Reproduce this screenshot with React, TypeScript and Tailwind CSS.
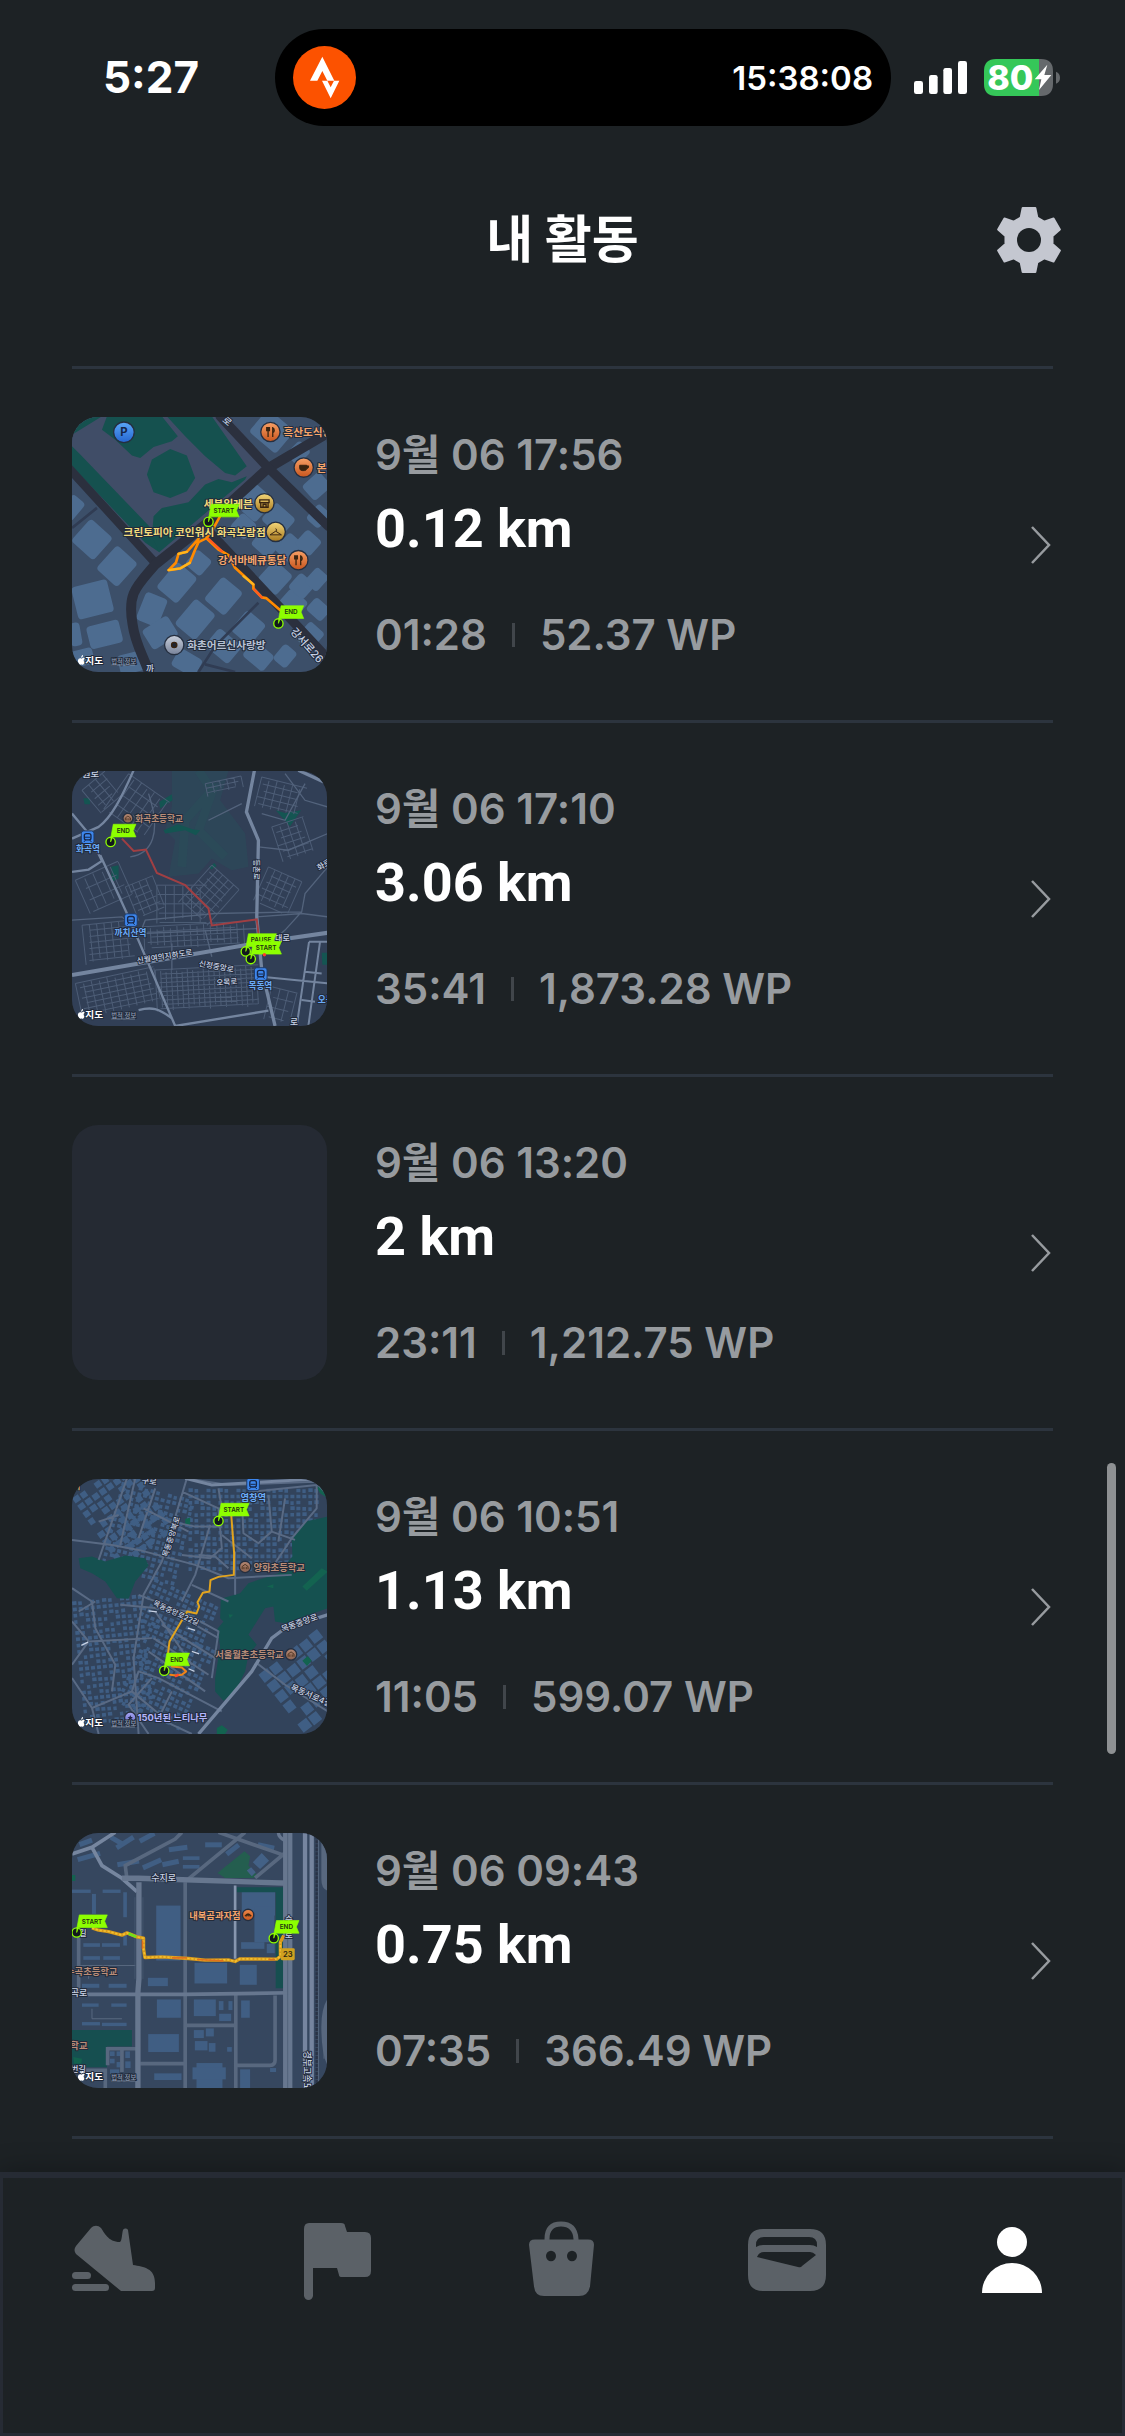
import type { ReactNode } from 'react';

const MAP_FONT = "Inter, 'Noto Sans CJK KR', sans-serif";

type Point = [number, number];

/* ---------- Map building parts ---------- */

function Flag({ x, y, label }: { x: number; y: number; label: string }) {
  const w = label === 'END' ? 68 : 84;
  return (
    <g transform={`translate(${x} ${y})`}>
      <circle r="14" fill="#12181c" stroke="#8dff00" strokeWidth="4" />
      <path d={`M8 -53H${8 + w}L${w} -34L${8 + w} -15H6L0 0L1 -15Z`} fill="#8dff00" stroke="#8dff00" strokeWidth="2" />
      <text x={w / 2 + 4} y="-27" textAnchor="middle" fontFamily={MAP_FONT} fontSize="19" fontWeight="600" fill="#1d3312">
        {label}
      </text>
    </g>
  );
}

type LabelProps = { x: number; y: number; children: ReactNode; color?: string; size?: number; rotate?: number; weight?: number };

function Label({ x, y, children, color = '#c9d3e6', size = 28, rotate = 0, weight = 500 }: LabelProps) {
  return (
    <text
      transform={`translate(${x} ${y}) rotate(${rotate})`}
      fontFamily={MAP_FONT}
      fontSize={size}
      fontWeight={weight}
      fill={color}
      stroke="#222b3b"
      strokeWidth="6"
      strokeLinejoin="round"
      paintOrder="stroke"
    >
      {children}
    </text>
  );
}

// Evenly spaced small streets, rotated around the block's corner
function Streets({ x, y, w, h, dx, dy, rotate = 0 }: { x: number; y: number; w: number; h: number; dx: number; dy: number; rotate?: number }) {
  let d = '';
  for (let i = 0; i <= w; i += dx) d += `M${i} ${(i * 3) % 11}V${h - ((i * 5) % 17)}`;
  for (let j = 0; j <= h; j += dy) d += `M${(j * 5) % 23} ${j}H${w - ((j * 7) % 29)}`;
  return <path d={d} transform={`translate(${x} ${y}) rotate(${rotate})`} fill="none" stroke="#4d5d76" strokeWidth="3" />;
}

// Rows of small buildings with a slightly uneven footprint
function Buildings({ x, y, cols, rows, step = 18, rotate = 0 }: { x: number; y: number; cols: number; rows: number; step?: number; rotate?: number }) {
  let d = '';
  for (let i = 0; i < cols; i++) {
    for (let j = 0; j < rows; j++) {
      const n = (i * 7 + j * 11 + i * j * 3) % 5;
      if (n === 4) continue;
      d += `M${i * step} ${j * step + n}h${step - 5 - n}v${step - 7}h-${step - 5 - n}z`;
    }
  }
  return <path d={d} transform={`translate(${x} ${y}) rotate(${rotate})`} fill="#3f5e84" />;
}

function Poi({ x, y, r = 29, from, to, children }: { x: number; y: number; r?: number; from: string; to: string; children?: ReactNode }) {
  const id = `poi-${x}-${y}`;
  return (
    <g>
      <linearGradient id={id} x1="0" y1="0" x2="0" y2="1">
        <stop offset="0" stopColor={from} />
        <stop offset="1" stopColor={to} />
      </linearGradient>
      <circle cx={x} cy={y} r={r} fill={`url(#${id})`} stroke="#252f40" strokeWidth="4" />
      <g transform={`translate(${x} ${y}) scale(${r / 29})`} fill="none" stroke="#3a2410" strokeWidth="4">
        {children}
      </g>
    </g>
  );
}

function Station({ x, y }: { x: number; y: number }) {
  return (
    <g transform={`translate(${x} ${y})`}>
      <rect x="-19" y="-19" width="38" height="38" rx="7" fill="#3d86ec" stroke="#1f3a66" strokeWidth="3" />
      <rect x="-10" y="-11" width="20" height="19" rx="6" fill="none" stroke="#15264a" strokeWidth="4" />
      <path d="M-8 0H8M-7 9L-11 14M7 9L11 14" stroke="#15264a" strokeWidth="3" />
    </g>
  );
}

const school = <path d="M-15 12V-2L0 -13L15 -2V12M-6 12V0M6 12V0" />;
const fork = <path d="M-7 -15V15M7 15V-15M-11 -15V-4H-3V-15M7 -13C13 -9 13 0 7 2" />;

function MapFrame({ land, label, children }: { land: string; label: string; children: ReactNode }) {
  return (
    <svg viewBox="0 2 766 766" role="img" aria-label={label} className="block size-full">
      <rect width="768" height="770" fill={land} />
      {children}
      <path d="M29 728c4-4 9-3 9 0c-4 2-4 8 0 11c-2 5-4 8-7 7c-3-1-4-1-6 0c-4 0-8-8-7-13c1-6 6-8 11-5M28 725c-1-4 2-7 5-8c1 4-2 8-5 8" fill="#fff" />
      <Label x={40} y={744} color="#ffffff" size={29} weight={700}>지도</Label>
      <Label x={118} y={743} color="#8f9db3" size={19}>법적 정보</Label>
      <path d="M118 747H189" stroke="#8f9db3" strokeWidth="2" />
    </svg>
  );
}

/* ---------- Route maps ---------- */

function GangseoMap() {
  // Centre x, centre y, width, height, turn of each city block
  const blocks = [
    [0, 275, 50, 70, 40], [60, 370, 90, 90, 42], [135, 450, 85, 95, 42], [62, 550, 110, 100, -14], [98, 655, 100, 70, -14],
    [30, 725, 70, 50, -14], [10, 655, 34, 70, -10], [240, 580, 70, 90, 22], [265, 650, 90, 70, -32], [315, 500, 80, 100, 40],
    [380, 440, 60, 60, 40], [455, 540, 80, 90, 40], [370, 610, 80, 100, 40], [455, 690, 90, 70, 40], [530, 635, 75, 80, 40],
    [560, 720, 80, 60, 40], [640, 720, 50, 60, 40], [610, 485, 75, 80, 42], [665, 560, 70, 60, 42], [690, 510, 60, 60, 42],
    [740, 580, 60, 50, 42], [735, 490, 50, 60, 42], [600, 45, 105, 90, 40], [735, 210, 60, 70, 48], [740, 300, 50, 60, 42],
    [550, 260, 80, 90, 42], [620, 310, 80, 70, 42], [660, 400, 80, 70, 42], [585, 380, 70, 70, 42], [710, 380, 60, 60, 42],
    [345, 740, 80, 60, 30], [180, 740, 80, 60, -14], [515, 330, 60, 60, 42], [680, 110, 50, 60, 45], [715, 660, 60, 70, 42],
  ];
  return (
    <MapFrame land="#3c4f69" label="강서로 경로">
      <path d="M0 0H470L600 150L260 440L0 140Z" fill="#404d67" />
      <path d="M0 0H90L0 55ZM105 0H270L318 60L300 75L245 92L205 125L180 118L130 70L90 40ZM285 0H420L525 150L490 178L460 170L400 120L340 60ZM0 90L22 112L232 330L250 350L262 408L220 380L0 150ZM240 130L295 98L345 118L370 185L345 225L295 245L245 228L225 175Z" fill="#15514f" />
      <path d="M240 360L245 300L270 275L350 258L400 205L440 188L480 198L525 180L520 190L262 408Z" fill="#15514f" />
      {blocks.map(([x, y, w, h, turn], i) => (
        <rect key={i} x={x - w / 2} y={y - h / 2} width={w} height={h} rx="12" transform={`rotate(${turn} ${x} ${y})`} fill="#4d6c90" />
      ))}
      <path d="M0 335L75 275M560 560L430 690L380 768M400 745L490 768" fill="none" stroke="#303c53" strokeWidth="8" />
      <g fill="none" stroke="#2b303e" strokeLinecap="round">
        <path d="M-10 155L250 440" strokeWidth="26" />
        <path d="M768 50L590 155L420 310L250 445C195 510 165 530 182 625C190 685 215 720 235 780" strokeWidth="30" />
        <path d="M445 0L590 155L770 330M420 355L770 730" strokeWidth="28" />
      </g>
      <g fill="none" strokeLinecap="round" strokeLinejoin="round">
        <path d="M445 300L420 345L404 366L380 378L370 400L354 440L325 457L290 462L312 440L320 413L345 407L380 368M404 366L440 400L470 417L490 455L545 505V518L570 544L583 546L625 582" stroke="#ff8a00" strokeWidth="8" />
        <path d="M290 462L325 457L354 440M320 413L345 407M515 480L545 505" stroke="#ffb61c" strokeWidth="7" />
        <path d="M410 368L450 405M548 520L570 544" stroke="#ff5a1f" strokeWidth="7" />
      </g>
      <Poi x={156} y={48} r={31} from="#5aa7f8" to="#2565cf" />
      <text x="156" y="60" textAnchor="middle" fontFamily={MAP_FONT} fontSize="34" fontWeight="700" fill="#15264a">P</text>
      <Poi x={596} y={47} from="#f7a066" to="#c8551d">{fork}</Poi>
      <Label x={635} y={60} color="#f6a56b" size={32} weight={700}>흑산도식당</Label>
      <Poi x={696} y={154} from="#f7a066" to="#c8551d">
        <path d="M-12 -7H9V3Q8 9 2 9H-5Q-12 8 -12 2ZM9 -5H15Q15 3 9 3" fill="#3a2410" strokeWidth="3" />
      </Poi>
      <Label x={735} y={167} color="#f6a56b" size={32} weight={700}>본</Label>
      <Label x={396} y={274} color="#f3dc7d" size={32} weight={700}>세븐일레븐</Label>
      <Poi x={578} y={261} from="#f3d678" to="#a8791f">
        <path d="M-14 -10H14V-2H-14ZM-11 0V12H11V0M-4 12V3H5V12" />
      </Poi>
      <Flag x={410} y={317} label="START" />
      <Label x={155} y={360} color="#f3dc7d" size={32} weight={700}>크린토피아 코인워시 화곡보람점</Label>
      <Poi x={612} y={347} from="#f3d678" to="#a8791f">
        <path d="M0 -10Q6 -4 0 -2L-17 9H17L0 -2" strokeWidth="3" />
      </Poi>
      <Label x={438} y={445} color="#f6a56b" size={32} weight={700}>강서바베큐통닭</Label>
      <Poi x={680} y={432} from="#f7a066" to="#c8551d">{fork}</Poi>
      <Flag x={620} y={622} label="END" />
      <Label x={655} y={648} rotate={48} size={32}>강서로26</Label>
      <Poi x={307} y={687} from="#c8cfdb" to="#78839a"><circle r="8" fill="#1e2430" /></Poi>
      <Label x={346} y={700} color="#b6c0d2" size={32} weight={700}>화촌어르신사랑방</Label>
      <Label x={450} y={14} rotate={40}>로</Label>
      <Label x={222} y={768} size={26}>까</Label>
    </MapFrame>
  );
}

function HwagokMap() {
  return (
    <MapFrame land="#313f56" label="화곡역에서 목동역 경로">
      <path d="M300 0H470L445 90L520 190L530 290L480 300L420 265L380 310L290 320L310 210L280 180L300 110Z" fill="#2c4a59" opacity="0.75" />
      <path d="M380 0L420 60L340 150L330 290M430 40L380 180L460 260" fill="none" stroke="#28505a" strokeWidth="26" opacity="0.4" />
      <path d="M262 95L300 72L302 90L265 115ZM275 180L318 162L365 178L385 180L372 195L340 180L280 190ZM612 120L640 128L688 120L655 168ZM34 84H54V102H38ZM118 290L140 285V325L120 335ZM412 290L428 278L434 288L418 298ZM750 548H768V584H752Z" fill="#145552" />
      <Streets x={170} y={10} w={150} h={130} dx={24} dy={32} rotate={35} />
      <Streets x={30} y={60} w={90} h={90} dx={26} dy={22} rotate={-40} />
      <Streets x={10} y={330} w={140} h={110} dx={28} dy={36} rotate={-24} />
      <Streets x={160} y={350} w={90} h={110} dx={22} dy={20} rotate={-22} />
      <Streets x={255} y={345} w={150} h={115} dx={26} dy={28} />
      <Streets x={420} y={285} w={110} h={150} dx={22} dy={20} rotate={42} />
      <Streets x={400} y={40} w={110} h={40} dx={22} dy={14} rotate={-12} />
      <Streets x={570} y={20} w={140} h={90} dx={24} dy={20} rotate={14} />
      <Streets x={600} y={170} w={100} h={110} dx={24} dy={20} rotate={-18} />
      <Streets x={590} y={290} w={110} h={110} dx={22} dy={22} rotate={24} />
      <Streets x={30} y={465} w={150} h={120} dx={22} dy={18} rotate={-6} />
      <Streets x={215} y={470} w={300} h={70} dx={20} dy={16} rotate={-3} />
      <Streets x={10} y={640} w={240} h={110} dx={24} dy={16} rotate={-12} />
      <Streets x={250} y={600} w={310} h={125} dx={16} dy={13} rotate={-3} />
      <Streets x={600} y={650} w={80} h={100} dx={26} dy={30} rotate={14} />
      <path d="M230 70C270 190 240 250 175 260M510 100L410 150M570 130L640 150L700 40M560 230L650 240L768 190M200 500L220 450L430 430L690 425M570 540L640 480L690 425L700 370L768 290M0 450L150 440L210 490L560 475M555 440L690 430L768 440M300 520V600M400 480L420 560M90 270L150 390M640 10L700 90L768 110" fill="none" stroke="#53637c" strokeWidth="4" />
      <g fill="none" stroke="#74859f">
        <path d="M185 0C150 80 120 140 80 170L0 205M0 305L50 298L90 272L50 190L0 130M85 255L165 430L310 768M310 768L590 722M200 720C240 710 260 715 300 745" strokeWidth="7" />
        <path d="M0 615L350 555L560 518L768 488" strokeWidth="12" />
        <path d="M548 0L524 125L560 210L555 440L570 600L610 768" strokeWidth="10" />
        <path d="M570 620L768 640M712 515H768M712 515L675 768M745 515L710 768M700 605L750 610M690 690L730 695" strokeWidth="6" />
        <path d="M680 0L768 40" strokeWidth="10" />
      </g>
      <path d="M150 205L185 242L222 238L255 308L340 345L410 415L420 466L555 448L560 490L578 556" fill="none" stroke="#a03f43" strokeWidth="6" />
      <Label x={30} y={20}>원로</Label>
      <Poi x={168} y={144} r={15} from="#b58873" to="#8a6250">{school}</Poi>
      <Label x={190} y={154} color="#b98d78" size={26} weight={700}>화곡초등학교</Label>
      <Station x={47} y={201} />
      <Label x={12} y={246} color="#6aaaf7" size={26} weight={700}>화곡역</Label>
      <Flag x={116} y={215} label="END" />
      <Station x={177} y={450} />
      <Label x={128} y={497} color="#6aaaf7" size={26} weight={700}>까치산역</Label>
      <Label x={548} y={268} rotate={90} size={22}>등촌로</Label>
      <Label x={196} y={580} rotate={-9} size={23}>신월여의지하도로</Label>
      <Label x={380} y={588} rotate={10} size={23}>신정중앙로</Label>
      <Label x={434} y={646} size={23} rotate={-4}>오목로</Label>
      <Label x={610} y={512} size={24}>대로</Label>
      <Flag x={522} y={544} label="PAUSE" />
      <Flag x={537} y={567} label="START" />
      <circle cx="578" cy="554" r="5" fill="#ff3b30" />
      <Station x={567} y={612} />
      <Label x={530} y={658} color="#6aaaf7" size={26} weight={700}>목동역</Label>
      <Label x={738} y={698} color="#6aaaf7" size={26} weight={700}>오목</Label>
      <Label x={742} y={302} size={24} rotate={-30}>화로</Label>
      <Label x={655} y={765} size={26}>로</Label>
    </MapFrame>
  );
}

function YeomchangMap() {
  return (
    <MapFrame land="#32435b" label="염창역 경로">
      <Buildings x={150} y={10} cols={13} rows={15} rotate={14} />
      <Buildings x={350} y={30} cols={22} rows={14} />
      <Buildings x={0} y={370} cols={12} rows={21} rotate={-6} />
      <Buildings x={250} y={300} cols={12} rows={8} rotate={24} />
      <Buildings x={240} y={430} cols={12} rows={15} rotate={24} />
      <Buildings x={0} y={60} cols={8} rows={10} step={26} rotate={-35} />
      <Buildings x={560} y={590} cols={6} rows={6} step={38} rotate={-38} />
      <path d="M20 240L60 235L100 250L160 232L220 240L230 262L190 310L170 362L135 360L100 310L60 285L25 270Z" fill="#155150" />
      <path d="M768 115L708 128L660 175L662 235L620 285L530 315L505 345L447 362L445 420L455 430L437 452L445 505L430 600V640L455 668L490 640L520 580L530 530L555 500L530 470L580 390L605 385L610 430L640 435L768 390Z" fill="#155150" />
      <path d="M692 325L750 270L768 280L705 338ZM585 325L605 318V330ZM470 408L484 410L474 420ZM692 548L708 534L720 548L706 564ZM435 750L450 742L468 755L460 768H435ZM735 25L768 20V60L745 45ZM340 122L355 118V140L340 138Z" fill="#136350" />
      <g fill="none" stroke="#596a84" strokeWidth="6" strokeLinejoin="round">
        <path d="M165 0L80 245M190 0L145 200M345 0L270 250L215 350L185 540L200 768M0 185L120 200L200 215L370 260L470 300L660 290M330 40L440 90L450 210L415 240L330 230M80 130L140 110M215 90L350 160M250 30L200 180M440 30L450 90M415 140L370 290L330 370" />
        <path d="M510 60L515 165L560 195L600 160L590 50M450 145H370L300 130M490 220L490 350M600 160L670 185M640 60L620 190M450 170L540 240M360 320L470 370M145 380L360 400M200 350L330 400L440 460L420 600M250 400L360 560M300 400L440 480M270 440L430 540M245 480L410 590M230 520L400 640M0 330L60 370L70 450L130 560L120 640M0 430L50 490L0 560M50 490L240 480M70 370L20 400M0 600L60 690L80 768M60 690L180 640L200 580L260 600L450 700M180 640L300 740L360 768M240 600L170 680L230 768M300 640L260 720" />
        <path d="M340 0L470 20L730 10L768 50M540 40L735 20V90L660 180L600 270M555 555L640 620L768 700M380 230L430 235L470 270" />
      </g>
      <path d="M380 768L540 580L600 480L640 450L768 410" fill="none" stroke="#74859f" strokeWidth="10" />
      <path d="M340 0L420 20L768 0" fill="none" stroke="#74859f" strokeWidth="9" />
      <path d="M230 398L255 401M348 450L370 457M360 520L382 527M350 572L368 580M28 502L48 492" stroke="#c6d0e2" strokeWidth="4" />
      <g fill="none" strokeLinejoin="round" strokeLinecap="round">
        <path d="M478 105L487 225L486 290L440 296L416 306L413 340L393 344L377 372L382 385L374 406L346 400L325 435L293 490L288 530" stroke="#e2a41e" strokeWidth="6" />
        <path d="M300 565L330 568L343 580L330 590L312 592L295 590" stroke="#f08418" strokeWidth="6" />
        <path d="M312 594L318 590" stroke="#ff4a2a" strokeWidth="7" />
      </g>
      <Label x={0} y={45} color="#e8cf75" size={28}>ᅥ</Label>
      <Label x={208} y={14} rotate={8} size={25}>구로</Label>
      <Station x={544} y={18} />
      <Label x={506} y={67} color="#6aaaf7" size={28} weight={700}>염창역</Label>
      <Flag x={440} y={128} label="START" />
      <Label x={286} y={238} rotate={-72} size={23}>목동중앙북로</Label>
      <Poi x={520} y={266} r={17} from="#b58873" to="#8a6250">{school}</Poi>
      <Label x={545} y={277} color="#b98d78" size={28} weight={700}>양화초등학교</Label>
      <Label x={242} y={380} rotate={25} size={22}>목동중앙로22길</Label>
      <Label x={632} y={462} rotate={-20} size={25}>목동중앙로</Label>
      <Label x={430} y={540} color="#b98d78" size={28} weight={700}>서울월촌초등학교</Label>
      <Poi x={658} y={529} r={17} from="#b58873" to="#8a6250">{school}</Poi>
      <Label x={655} y={634} rotate={24} size={25}>목동서로4길</Label>
      <Flag x={277} y={578} label="END" />
      <Poi x={175} y={719} r={17} from="#a5a6f4" to="#6e6fc9">
        <path d="M0 -14L4 -4L14 -4L6 3L9 13L0 7L-9 13L-6 3L-14 -4L-4 -4Z" fill="#1f2347" strokeWidth="0" />
      </Poi>
      <Label x={197} y={730} color="#b3b5fb" size={28} weight={700}>150년된 느티나무</Label>
    </MapFrame>
  );
}

function SujiMap() {
  const lots = [
    [253, 220, 73, 165], [510, 175, 100, 75], [548, 222, 60, 108], [508, 330, 70, 20], [585, 335, 24, 28], [368, 392, 98, 62], [504, 398, 51, 60],
    [228, 437, 60, 25], [255, 502, 72, 55], [366, 502, 66, 50], [441, 507, 14, 27], [470, 507, 12, 27], [442, 545, 36, 22], [508, 505, 26, 52],
    [229, 606, 92, 54], [366, 594, 30, 24], [402, 589, 24, 24], [369, 627, 38, 28], [411, 633, 20, 26], [374, 693, 78, 75], [362, 706, 100, 36],
    [247, 724, 82, 20], [505, 712, 30, 56], [466, 645, 14, 14], [92, 172, 54, 10], [60, 185, 12, 60], [0, 172, 56, 10], [154, 180, 11, 75],
    [34, 333, 50, 11], [90, 333, 54, 11], [34, 372, 50, 11], [94, 372, 50, 11], [154, 300, 11, 40], [110, 455, 54, 12], [30, 455, 52, 12],
    [30, 514, 50, 10], [118, 514, 46, 10], [30, 570, 54, 10], [90, 572, 74, 10], [114, 658, 14, 14], [134, 658, 12, 14], [114, 680, 14, 14],
    [134, 690, 12, 16], [160, 658, 14, 20], [160, 688, 16, 20], [114, 712, 28, 14], [333, 72, 50, 11], [333, 98, 50, 11], [595, 708, 18, 12],
  ];
  const sheds = [[15, 75, 70, -16], [130, 40, 60, -32], [200, 20, 50, -28], [135, 90, 66, -10], [290, 45, 56, -8], [210, 100, 60, -24], [270, 90, 50, -12], [400, 30, 50, 0], [460, 60, 46, -38], [120, 8, 40, 30], [560, 30, 50, 12], [20, 30, 40, -20]];
  return (
    <MapFrame land="#36475f" label="수지로 경로">
      {lots.map(([x, y, w, h], i) => (
        <rect key={i} x={x} y={y} width={w} height={h} fill="#405e83" />
      ))}
      {sheds.map(([x, y, w, turn], i) => (
        <rect key={i} x={x} y={y} width={w} height="15" transform={`rotate(${turn} ${x} ${y})`} fill="#405e83" />
      ))}
      <path d="M495 165H634V468H612V180H495ZM0 594H180V643H105V706H0Z" fill="#164f50" />
      <path d="M437 122L518 57L535 72L530 100L557 130L545 137H460Z" fill="#245e4f" />
      <path d="M0 128H10V146H0ZM4 675L30 680L28 695H6Z" fill="#13624f" />
      <path d="M543 90L570 62L592 85L565 110ZM525 115L538 105L552 120L540 132Z" fill="#436186" />
      <g fill="none" stroke="#58687f" strokeWidth="11">
        <path d="M165 140L160 100L310 20L330 0M350 140L520 0M440 0L640 70M550 137L640 62M20 315V485M345 580H490M205 695H340M495 700H595Q610 700 610 685V490M107 700V650H195M0 715H100V768M150 650V720M340 150V768M492 480V768" />
        <path d="M0 65L60 45L130 0M60 45L90 100L150 138L195 178" stroke="#76869f" />
        <path d="M20 400H190M50 440V400M60 530V560H150" strokeWidth="3" />
        <path d="M740 0V768M757 590V680" strokeWidth="3" />
      </g>
      <g fill="none" stroke="#67778f">
        <path d="M150 138H200L655 153" strokeWidth="16" />
        <path d="M201 150V440L198 480V768" strokeWidth="16" />
        <path d="M648 0V768" strokeWidth="28" />
        <path d="M45 487H340L655 482" strokeWidth="11" />
        <path d="M490 160V380" stroke="#8796ae" strokeWidth="8" />
        <path d="M620 0Q620 15 640 25" strokeWidth="10" />
      </g>
      <path d="M648 0V768" stroke="#465770" strokeWidth="2" />
      <path d="M213 195V440M189 195V440" stroke="#4c5d76" strokeWidth="2" />
      <path d="M700 0V768M720 0V768" stroke="#76859f" strokeWidth="13" />
      <path d="M749 0V140Q749 170 768 175V0ZM768 500Q748 530 749 590Q750 670 768 700" fill="#58687f" />
      <path d="M735 0V768" stroke="#2a3346" strokeWidth="7" strokeDasharray="9 3" />
      <g fill="none" strokeLinejoin="round">
        <path d="M60 287L80 294L110 298L150 309L165 302L195 314L215 318V350L219 376L270 374L350 379L400 384L470 383L490 388L505 380L615 381L626 372V330L636 310" stroke="#d99a1b" strokeWidth="10" />
        <path d="M60 287L80 294L110 298L150 309L165 302L195 314L215 318V350L219 376L270 374L350 379L400 384L470 383L490 388L505 380L615 381L626 372V330" stroke="#f2c230" strokeWidth="5" strokeDasharray="7 5" />
        <path d="M170 304L193 314" stroke="#6fe01c" strokeWidth="8" />
        <path d="M300 377H345M375 382L455 386M212 325V350M590 382H610" stroke="#e0721c" strokeWidth="5" />
      </g>
      <Label x={238} y={147} size={27}>수지로</Label>
      <Label x={352} y={259} color="#f6a56b" size={28} weight={700}>내복곰과자점</Label>
      <Poi x={529} y={248} r={17} from="#f08a4b" to="#c8551d">
        <path d="M-17 5Q0 -18 17 5L9 8L5 0L0 8L-5 0L-9 8Z" fill="#3a2410" strokeWidth="2" />
      </Poi>
      <Label x={640} y={270} size={25}>수</Label>
      <Label x={640} y={318} size={25}>로</Label>
      <Label x={22} y={312} size={24}>길</Label>
      <Flag x={14} y={301} label="START" />
      <Flag x={606} y={318} label="END" />
      <rect x="627" y="348" width="42" height="36" rx="4" fill="#cfa120" />
      <text x="648" y="374" textAnchor="middle" fontFamily={MAP_FONT} fontSize="23" fontWeight="600" fill="#2d2710">23</text>
      <Label x={-18} y={430} color="#b98d78" size={28} weight={700}>수곡초등학교</Label>
      <Label x={-4} y={492} size={27}>곡로</Label>
      <Label x={-5} y={650} color="#b98d78" size={28} weight={700}>학교</Label>
      <Label x={-4} y={720} size={25}>번길</Label>
      <Label x={698} y={656} rotate={90} size={26}>경부고속도</Label>
    </MapFrame>
  );
}

/* ---------- Status bar and header ---------- */

const GEAR_TOOTH: Point[] = [[-25, -67], [-19, -96], [19, -96], [25, -67]];
const GEAR_POINTS = [0, 60, 120, 180, 240, 300]
  .flatMap((deg) => {
    const a = (deg * Math.PI) / 180;
    return GEAR_TOOTH.map(([x, y]) => `${x * Math.cos(a) - y * Math.sin(a)},${x * Math.sin(a) + y * Math.cos(a)}`);
  })
  .join(' ');

function StatusBar() {
  return (
    <div className="flex h-[126px] items-center pt-[29px] font-[Inter] text-white">
      <time className="ml-[103px] w-[172px] shrink-0 pb-[2px] text-[44px] leading-[48px] font-bold">5:27</time>
      <div className="flex h-[97px] flex-1 items-center justify-between rounded-full bg-black px-[18px]">
        <svg viewBox="69 63 189 189" className="size-[63px]" aria-label="Strava">
          <circle cx="163.5" cy="157.5" r="94.5" fill="#fc5200" />
          <path d="M157 95L120 167H142L157 138L172 167H193Z" fill="#fff" />
          <path d="M156 167H172L182 187L192 167H208L182 220Z" fill="#fff" />
        </svg>
        <time className="text-[33px] leading-10 font-semibold">15:38:08</time>
      </div>
      <svg viewBox="102 57 159 99" className="ml-[23px] h-[33px] w-[53px] shrink-0" fill="#fff" aria-label="신호 강도">
        <rect x="102" y="117" width="27" height="39" rx="7" />
        <rect x="147" y="99" width="26" height="57" rx="7" />
        <rect x="190" y="78" width="26" height="78" rx="7" />
        <rect x="234" y="57" width="27" height="99" rx="7" />
      </svg>
      <svg viewBox="312 51 228 111" className="mr-[65px] ml-[17px] h-[37px] w-[76px] shrink-0 overflow-visible" aria-label="배터리 80%">
        <path d="M348 51H477V162H348Q312 162 312 126V87Q312 51 348 51Z" fill="#35c759" />
        <path d="M477 51H483Q519 51 519 87V126Q519 162 483 162H477ZM528 89Q540 94 540 107T528 125Z" fill="#65696c" />
        <text x="391" y="143" textAnchor="middle" fontFamily="Inter, sans-serif" fontSize="102" fontWeight="800" fill="#fff">80</text>
        <path d="M502 68L464 112H484L477 144L514 99H493Z" fill="#fff" />
      </svg>
    </div>
  );
}

function Header() {
  return (
    <header className="grid h-[228px] grid-cols-[1fr_auto_1fr] items-center px-[63px]">
      <h1 className="col-start-2 pb-2 font-['Noto_Sans_CJK_KR',sans-serif] text-[51px] leading-[60px] font-bold text-white">내 활동</h1>
      <button type="button" aria-label="설정" className="justify-self-end">
        <svg viewBox="-99 -99 198 198" className="size-[66px]">
          <polygon points={GEAR_POINTS} fill="#c4c7d0" stroke="#c4c7d0" strokeWidth="6" strokeLinejoin="round" />
          <circle r="36" fill="#1d2225" />
        </svg>
      </button>
    </header>
  );
}

/* ---------- Activity list ---------- */

type Activity = { date: string; distance: string; time: string; points: string; map?: ReactNode };

const activities: Activity[] = [
  { date: '9월 06 17:56', distance: '0.12 km', time: '01:28', points: '52.37 WP', map: <GangseoMap /> },
  { date: '9월 06 17:10', distance: '3.06 km', time: '35:41', points: '1,873.28 WP', map: <HwagokMap /> },
  { date: '9월 06 13:20', distance: '2 km', time: '23:11', points: '1,212.75 WP' },
  { date: '9월 06 10:51', distance: '1.13 km', time: '11:05', points: '599.07 WP', map: <YeomchangMap /> },
  { date: '9월 06 09:43', distance: '0.75 km', time: '07:35', points: '366.49 WP', map: <SujiMap /> },
];

function ActivityRow({ date, distance, time, points, map }: Activity) {
  return (
    <li className="border-b-3 border-[#2c343e]">
      <a href="#activity" className="flex items-center py-12">
        <div className="size-[255px] shrink-0 overflow-hidden rounded-[26px] bg-[#252a33]">{map}</div>
        <div className="ml-12 flex-1 font-[Inter,'Noto_Sans_CJK_KR',sans-serif] text-[42px] leading-12 font-semibold text-[#979b9f]">
          <p>{date}</p>
          <p className="mt-5 font-[Roboto] text-[54px] leading-[60px] font-bold text-white">{distance}</p>
          <p className="mt-[52px] flex items-center">
            <span>{time}</span>
            <span className="mx-[25px] h-6 w-[3px] bg-[#41464b]" />
            <span>{points}</span>
          </p>
        </div>
        <svg viewBox="0 0 20 38" className="mr-[2px] h-[38px] w-5 shrink-0" fill="none" stroke="#979b9f" strokeWidth="2.5" aria-hidden="true">
          <path d="M1 1L18 19L1 37" />
        </svg>
      </a>
    </li>
  );
}

/* ---------- Bottom tabs ---------- */

const tabs = [
  {
    name: '운동',
    icon: (
      <>
        <path d="M21 13C24 10 28 10 31 13C34 17 38 27 50 27C52 26 52 18 53 15C54 13 57 13 58 15L63 50C74 52 85 53 85 68V73Q85 76 82 76H51L6 39Q3 35 6 31Z" />
        <rect x="2" y="57" width="19" height="7" rx="3.5" />
        <rect x="2" y="69" width="37" height="7" rx="3.5" />
      </>
    ),
  },
  {
    name: '챌린지',
    icon: <path d="M15 8H47Q51 8 51 11L53 17H71Q77 17 77 23V56Q77 62 71 62H48Q45 62 45 60L43 53H19V81Q18 85 14.5 85T10 81V14Q10 8 15 8Z" />,
  },
  {
    name: '상점',
    icon: (
      <>
        <path d="M30 30V24Q30 9 44 9T59 24V30" fill="none" stroke="currentColor" strokeWidth="5" />
        <path fillRule="evenodd" d="M18 27H71Q77 27 77 33L73 81Q71 92 62 92H27Q18 92 17 81L12 33Q12 27 18 27ZM34 40A5 6 0 1 0 34 52A5 6 0 1 0 34 40ZM55 40A5 6 0 1 0 55 52A5 6 0 1 0 55 40Z" transform="translate(0 1) scale(1 .87)" />
      </>
    ),
  },
  {
    name: '지갑',
    icon: (
      <path fillRule="evenodd" d="M22 14H69Q85 14 85 30V60Q85 76 69 76H22Q7 76 7 60V30Q7 14 22 14ZM15 32Q18 30 22 30H69Q73 30 76 32V30Q76 22 68 22H23Q15 22 15 30ZM16 42L57 52Q60 53 61 51L75 40Q72 37 69 37H23Q18 37 16 42Z" />
    ),
  },
  {
    name: '내 정보',
    active: true,
    icon: (
      <>
        <circle cx="47" cy="27" r="15" />
        <path d="M17 78A30 30 0 0 1 77 78Z" />
      </>
    ),
  },
];

export default function App() {
  return (
    <div className="flex min-h-screen flex-col bg-[#1d2225]">
      <StatusBar />
      <Header />
      <main className="relative flex-1 px-[72px] pt-3 pb-[33px]">
        <ul className="border-t-3 border-[#2c343e]">
          {activities.map((activity) => (
            <ActivityRow key={activity.date} {...activity} />
          ))}
        </ul>
        <div className="absolute top-[1109px] right-[9px] h-[291px] w-[9px] rounded-full bg-[#8e9193]" />
      </main>
      <nav className="relative flex h-[264px] border-3 border-t-6 border-[#262b34] bg-[#1d2225] pt-[37px] shadow-[0_-3px_24px_rgba(0,0,0,0.25)]">
        {tabs.map(({ name, active, icon }) => (
          <a
            key={name}
            href="#tab"
            aria-label={name}
            aria-current={active ? 'page' : undefined}
            className={active ? 'flex-1 text-white' : 'flex-1 text-[#5b6167]'}
          >
            <svg viewBox="0 0 90 90" className="mx-auto size-[90px]" fill="currentColor">
              {icon}
            </svg>
          </a>
        ))}
      </nav>
    </div>
  );
}
